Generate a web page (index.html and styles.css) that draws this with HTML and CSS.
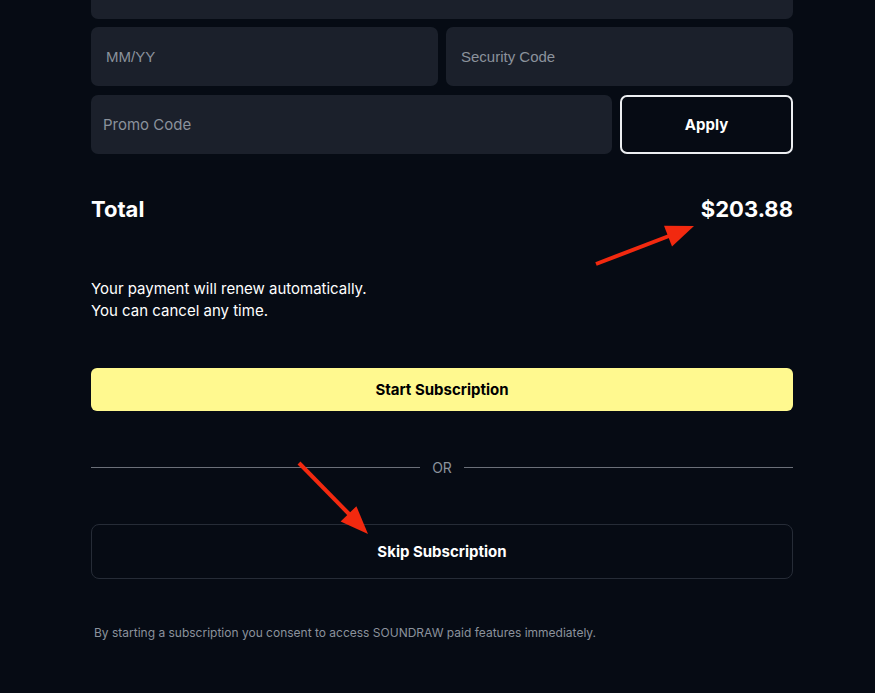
FILE: index.html
```html
<!DOCTYPE html>
<html lang="en">
<head>
    <meta charset="UTF-8">
    <meta name="viewport" content="width=device-width, initial-scale=1.0">
    <title>Checkout</title>
    <link rel="stylesheet" href="styles.css">
</head>
<body>

<div class="checkout">
    <div class="field-row">
        <input type="text" class="field card" placeholder="Card Number">
    </div>
    <div class="field-row">
        <input type="text" class="field card" placeholder="MM/YY">
        <input type="text" class="field card" placeholder="Security Code">
    </div>
    <div class="field-row promo-row">
        <input type="text" class="field promo" placeholder="Promo Code">
        <button type="button" class="apply-btn">Apply</button>
    </div>

    <div class="total">
        <span>Total</span>
        <span>$203.88</span>
    </div>

    <p class="renew">Your payment will renew automatically.<br>You can cancel any time.</p>

    <button type="button" class="start-btn">Start Subscription</button>

    <div class="divider"><span>OR</span></div>

    <button type="button" class="skip-btn">Skip Subscription</button>

    <p class="consent">By starting a subscription you consent to access SOUNDRAW paid features immediately.</p>
</div>

<!-- annotation arrows -->
<svg class="marks" width="875" height="693" viewBox="0 0 875 693">
    <line x1="596" y1="264" x2="669" y2="236" stroke="#f2290f" stroke-width="4"/>
    <polygon points="694,226 672,246.5 664,225.8" fill="#f2290f"/>
    <line x1="299" y1="463" x2="350" y2="515" stroke="#f2290f" stroke-width="4"/>
    <polygon points="368,534 340.6,521.6 356.4,506.2" fill="#f2290f"/>
</svg>

</body>
</html>
```
FILE: styles.css
```css
body {
    margin: 0;
    background-color: #060b14;
    font-family: Inter, "Noto Sans", sans-serif;
    color: #fff;
    overflow: hidden;
}
.checkout {
    width: 702px;
    margin-left: 91px;
    margin-top: -40px;
}
.field-row {
    display: flex;
    gap: 8px;
    margin-bottom: 8px;
}
.field {
    flex: 1;
    min-width: 0;
    height: 59px;
    box-sizing: border-box;
    padding: 0 15px;
    background-color: #1b202b;
    border: none;
    border-radius: 7px;
    font-family: inherit;
    font-size: 15px;
    color: #fff;
    outline: none;
}
.card {
    font-family: "Liberation Sans", Arial, sans-serif;
}
.field::placeholder {
    color: #8b929c;
}
.promo-row {
    margin-top: 9px;
}
.promo {
    padding-left: 12px;
}
.apply-btn {
    width: 173px;
    height: 59px;
    box-sizing: border-box;
    background: transparent;
    border: 2px solid #eceef1;
    border-radius: 7px;
    color: #fff;
    font-family: inherit;
    font-size: 15px;
    font-weight: 700;
}
.total {
    display: flex;
    justify-content: space-between;
    margin-top: 41px;
    font-size: 22px;
    font-weight: 700;
    line-height: 28px;
}
.renew {
    margin: 55px 0 0;
    font-size: 15px;
    line-height: 22px;
}
.start-btn, .skip-btn {
    display: block;
    width: 100%;
    font-family: inherit;
    font-size: 15px;
    font-weight: 700;
}
.start-btn {
    margin-top: 46px;
    height: 43px;
    background-color: #fff98f;
    color: #000;
    border: none;
    border-radius: 6px;
}
.divider {
    display: flex;
    align-items: center;
    gap: 12px;
    margin-top: 46px;
    height: 20px;
    color: #8b929c;
    font-size: 14px;
}
.divider::before, .divider::after {
    content: "";
    flex: 1;
    height: 1px;
    background-color: #6b7079;
}
.skip-btn {
    margin-top: 47px;
    height: 55px;
    background: transparent;
    color: #fff;
    border: 1px solid #262c37;
    border-radius: 8px;
}
.consent {
    margin: 46px 0 0 3px;
    font-size: 12px;
    line-height: 16px;
    color: #8b929c;
}
.marks {
    position: absolute;
    top: 0;
    left: 0;
    pointer-events: none;
}
```
